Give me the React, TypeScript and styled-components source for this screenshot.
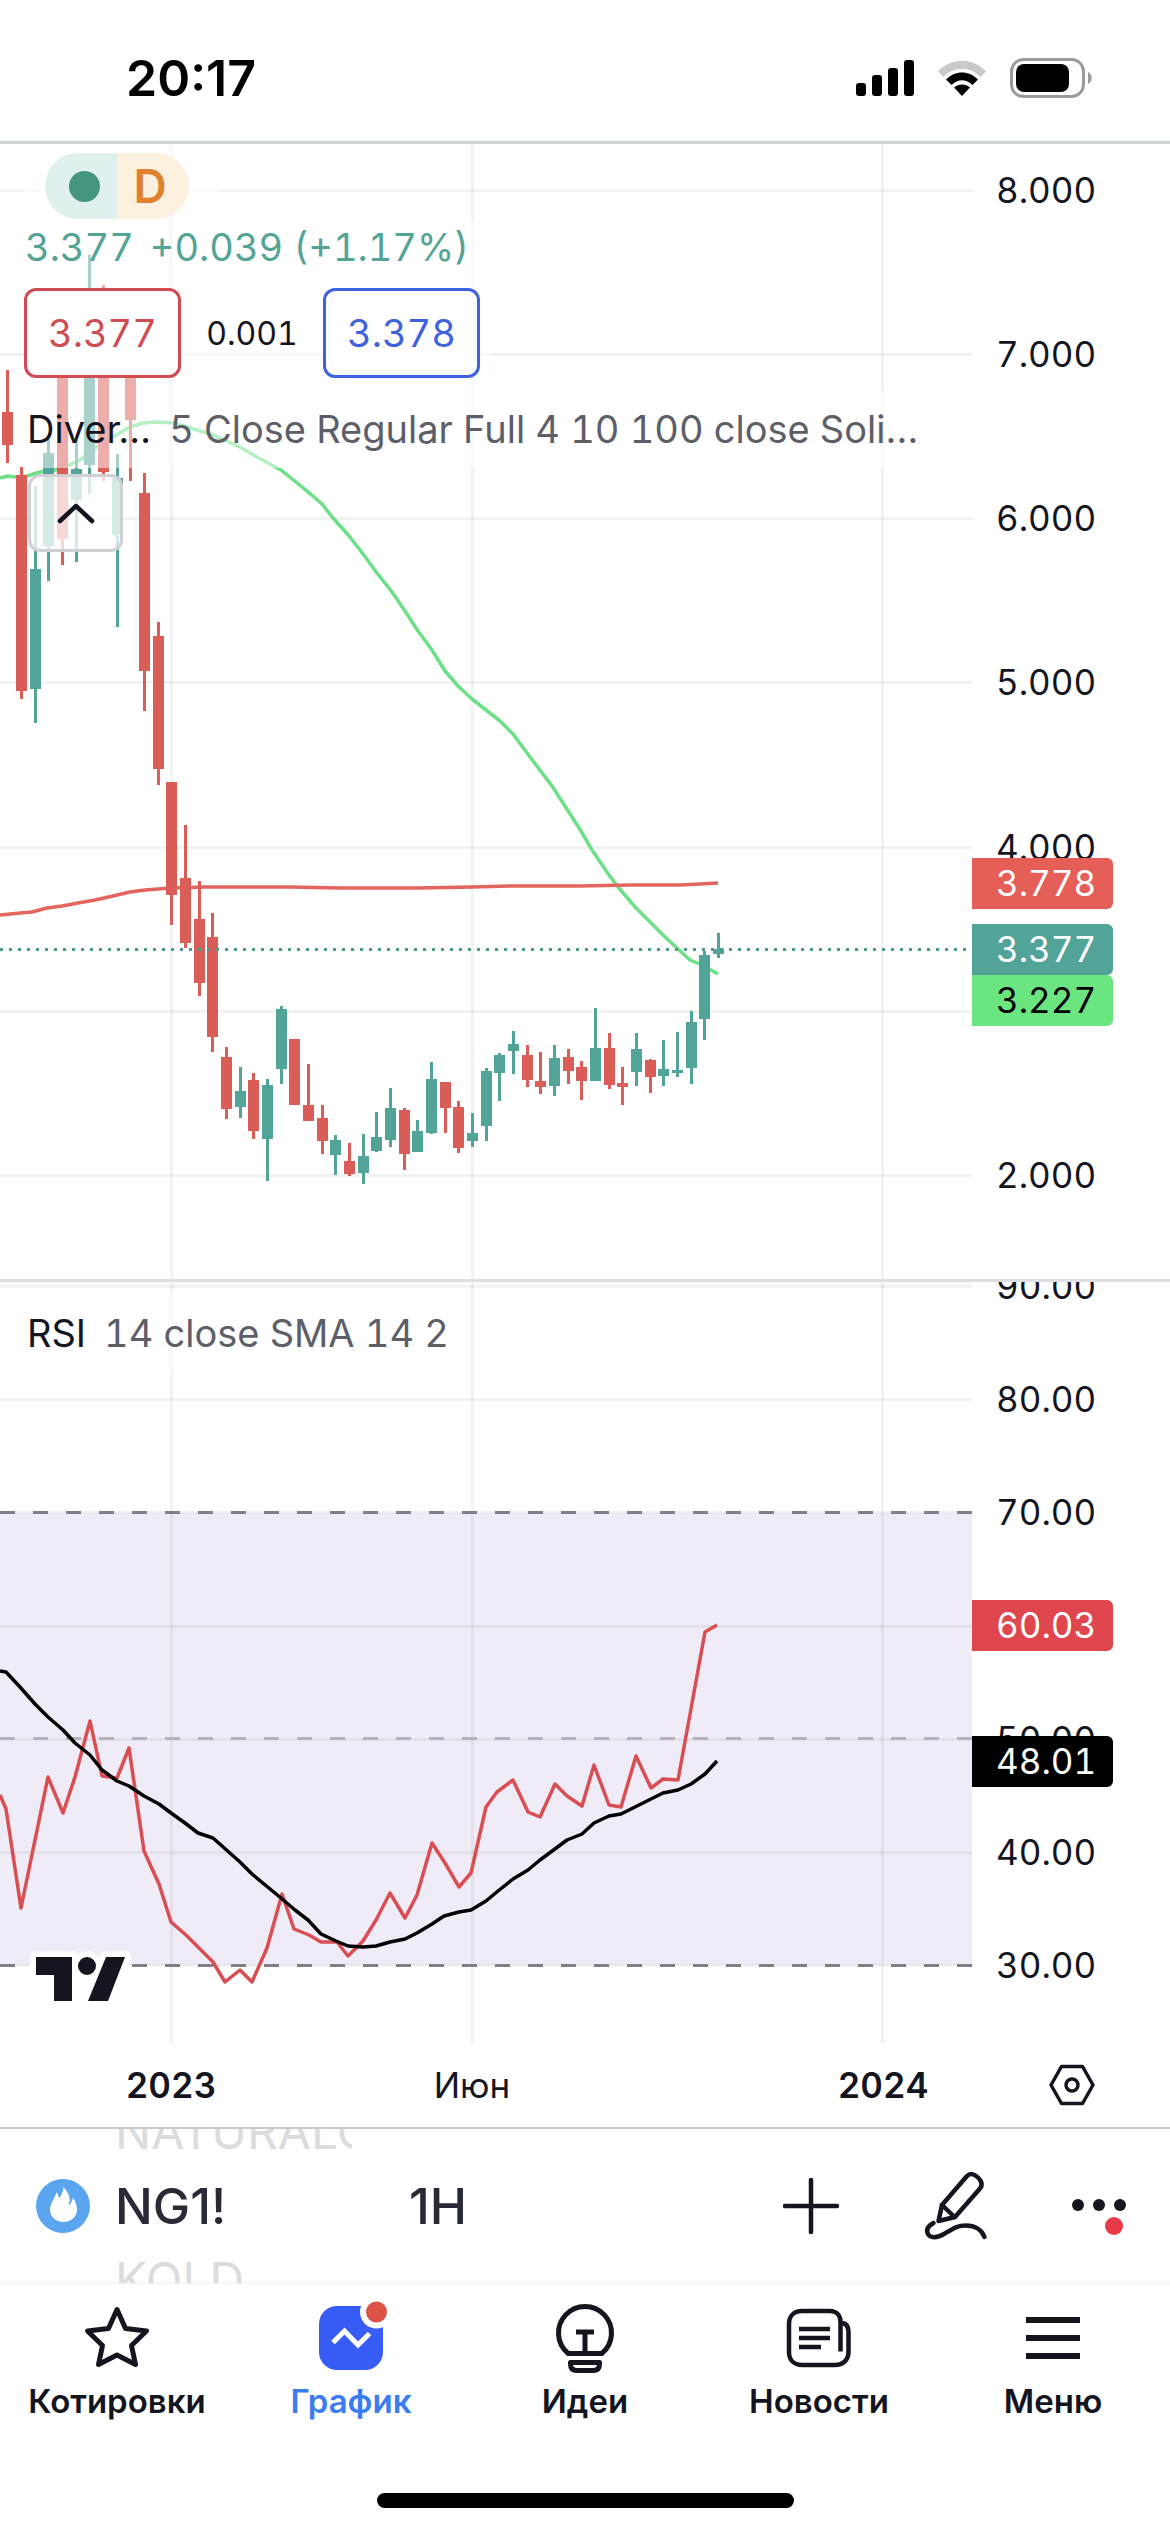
import React from "react";
import styled, { createGlobalStyle } from "styled-components";

const ink = "#14151f";
const up = "#52a398";
const down = "#db5d57";
const veil = "rgba(255, 255, 255, 0.5)";

const GlobalStyle = createGlobalStyle`
  *, *::before, *::after { box-sizing: border-box; }
  body {
    margin: 0;
    background: #fff;
    color: ${ink};
    font-family: Inter, "Noto Sans", sans-serif;
  }
  button {
    font: inherit;
    color: inherit;
    padding: 0;
    border: 0;
    background: none;
    cursor: pointer;
  }
  a { color: inherit; text-decoration: none; }
  svg { display: block; }
`;

const Screen = styled.div`
  display: flex;
  flex-direction: column;
  min-height: 100vh;
  overflow: hidden;
`;

/* ---------- status bar ---------- */

const StatusBar = styled.header`
  display: flex;
  align-items: center;
  justify-content: space-between;
  height: 144px;
  padding: 15px 78px 0 126px;
  border-bottom: 3px solid #cdd3d0;
`;

const Clock = styled.time`
  font-size: 50px;
  line-height: 60px;
  font-weight: 600;
  color: #000;
`;

const StatusIcons = styled.div`
  display: flex;
  align-items: center;
  gap: 23px;
`;

/* ---------- chart ---------- */

const Pane = styled.section`
  display: grid;
  grid-template-columns: minmax(0, 1fr) 198px;
  position: relative;
  font-variant-numeric: tabular-nums;
`;

const Divider = styled.div`
  height: 3px;
  background: #dedfe2;
`;

const Plot = styled.svg`
  width: 100%;
  height: auto;
`;

const Scale = styled.div<{ $top: number; $bottom: number }>`
  display: flex;
  flex-direction: column;
  justify-content: space-between;
  position: relative;
  overflow: hidden;
  padding-bottom: ${(p) => p.$bottom}px;

  &::before {
    content: "";
    margin-bottom: ${(p) => p.$top}px;
  }
`;

const Ticks = styled.div`
  flex: 1;
  display: flex;
  flex-direction: column;
  justify-content: space-between;
`;

const Tick = styled.span`
  height: 40px;
  padding-left: 24px;
  font-size: 35px;
  line-height: 40px;
`;

const Tag = styled.span<{ $at: number; $bg: string; $fg?: string }>`
  position: absolute;
  left: 0;
  top: ${(p) => p.$at}%;
  width: 141px;
  height: 51px;
  padding-left: 24px;
  border-radius: 0 6px 6px 0;
  background: ${(p) => p.$bg};
  color: ${(p) => p.$fg ?? "#fff"};
  font-size: 35px;
  line-height: 51px;
`;

const Legend = styled.div<{ $top: number }>`
  position: absolute;
  left: 24px;
  top: ${(p) => p.$top}px;
  display: flex;
  flex-direction: column;
  align-items: flex-start;
  white-space: nowrap;
  font-size: 38px;
`;

const BadgeRow = styled.div`
  display: flex;
  height: 78px;
  padding: 9px 34px 3px 21px;
  background: ${veil};
`;

const Badge = styled.span<{ $side: "left" | "right" }>`
  display: grid;
  place-items: center;
  width: 72px;
  height: 66px;
  padding: ${(p) => (p.$side === "left" ? "0 0 0 6px" : "0 6px 0 0")};
  border-radius: ${(p) => (p.$side === "left" ? "33px 0 0 33px" : "0 33px 33px 0")};
  background: ${(p) => (p.$side === "left" ? "#dff0ee" : "#fcf0df")};
  color: #e0812e;
  font-size: 46px;
  font-weight: 600;
`;

const OpenDot = styled.i`
  width: 31px;
  height: 31px;
  border-radius: 50%;
  background: #44957f;
`;

const ChangeRow = styled.div`
  display: flex;
  gap: 16px;
  height: 50px;
  padding: 0 24px 0 1px;
  line-height: 50px;
  background: ${veil};
  color: #54a495;
`;

const QuoteRow = styled.div`
  display: flex;
  align-items: center;
  gap: 24px;
  height: 118px;
  padding: 16px 10px 12px 0;
  background: ${veil};
`;

const QuoteButton = styled.button<{ $color: string }>`
  width: 157px;
  height: 90px;
  border: 3px solid ${(p) => p.$color};
  border-radius: 12px;
  background: #fff;
  color: ${(p) => p.$color};
`;

const Spread = styled.span`
  min-width: 94px;
  text-align: center;
  font-size: 32px;
`;

const StudyRow = styled.div`
  display: flex;
  gap: 18px;
  height: 78px;
  padding: 0 12px 0 3px;
  line-height: 78px;
  background: ${veil};
`;

const StudyInputs = styled.span`
  color: #5d5e68;
`;

const CollapseButton = styled.button`
  display: grid;
  place-items: center;
  width: 95px;
  height: 78px;
  margin: 6px 0 0 4px;
  border: 3px solid #cfcfd6;
  border-radius: 12px;
  background: rgba(255, 255, 255, 0.76);
`;

const TimeAxis = styled.div`
  display: grid;
  grid-template-columns: minmax(0, 1fr) 198px;
  height: 86px;
  border-bottom: 2px solid #c9c9cb;
`;

const Dates = styled.div`
  display: grid;
  grid-template-columns: 342fr 260fr 192fr 178fr;
  align-items: center;
  justify-items: center;
  font-size: 35px;
  font-variant-numeric: tabular-nums;
`;

const DateLabel = styled.span<{ $column: number; $bold?: boolean }>`
  grid-column: ${(p) => p.$column};
  font-weight: ${(p) => (p.$bold ? 600 : 400)};
`;

const AxisSettings = styled.button`
  display: grid;
  place-items: center;
  padding-left: 2px;
`;

/* ---------- toolbar ---------- */

const Toolbar = styled.div`
  display: flex;
  align-items: center;
  height: 155px;
  padding: 0 36px;
  border-bottom: 1px solid #efeff1;
  overflow: hidden;
`;

const Wheel = styled.div`
  display: flex;
  flex-direction: column;
  justify-content: center;
  width: 237px;
  height: 154px;
  margin-left: 25px;
  overflow: hidden;
`;

const WheelItem = styled.button<{ $current?: boolean }>`
  flex: none;
  height: 74px;
  text-align: left;
  white-space: nowrap;
  line-height: 74px;
  font-size: ${(p) => (p.$current ? 50 : 48)}px;
  font-weight: ${(p) => (p.$current ? 500 : 400)};
  color: ${(p) => (p.$current ? "#282a35" : "#dcdcdd")};
`;

const Interval = styled.button`
  margin-left: 57px;
  margin-right: auto;
  font-size: 50px;
  font-weight: 500;
  color: #282a35;
`;

const ToolButton = styled.button`
  display: grid;
  place-items: center;
  width: 145px;
  height: 80px;

  &:last-child {
    width: 70px;
    margin-left: 36px;
  }
`;

/* ---------- tab bar ---------- */

const TabBar = styled.nav`
  display: grid;
  grid-template-columns: repeat(5, minmax(0, 1fr));
  padding-top: 13px;
`;

const Tab = styled.a<{ $active?: boolean }>`
  display: flex;
  flex-direction: column;
  align-items: center;
  gap: 4px;
  font-size: 33px;
  line-height: 40px;
  font-weight: 600;
  color: ${(p) => (p.$active ? "#3b7df0" : ink)};
`;

const HomeIndicator = styled.div`
  align-self: center;
  width: 417px;
  height: 15px;
  margin-top: auto;
  margin-bottom: 24px;
  border-radius: 8px;
  background: #000;
`;

/* ---------- data ---------- */

// [high, body top, body bottom, low, rising]
const candles: [number, number, number, number, 0 | 1][] = [
  [226, 268, 301, 319, 0], [323, 331, 547, 555, 0], [342, 425, 545, 579, 1],
  [292, 309, 402, 437, 1], [190, 200, 395, 421, 0], [296, 325, 356, 418, 1],
  [111, 170, 321, 350, 1], [141, 170, 328, 337, 0], [310, 334, 391, 483, 1],
  [170, 200, 276, 337, 0], [329, 349, 527, 567, 0], [478, 492, 625, 641, 0],
  [638, 638, 751, 781, 0], [681, 734, 799, 804, 0], [737, 775, 839, 852, 0],
  [769, 793, 893, 908, 0], [903, 913, 965, 975, 0], [923, 947, 963, 974, 1],
  [929, 936, 987, 995, 0], [935, 941, 995, 1037, 1], [862, 865, 925, 940, 1],
  [895, 895, 961, 961, 0], [920, 961, 977, 977, 0], [961, 974, 997, 1010, 0],
  [991, 996, 1011, 1031, 1], [999, 1017, 1030, 1032, 0], [990, 1012, 1029, 1040, 1],
  [968, 993, 1007, 1008, 1], [944, 964, 996, 1003, 1], [964, 966, 1010, 1026, 0],
  [976, 987, 1008, 1008, 1], [918, 935, 989, 990, 1], [938, 938, 964, 989, 0],
  [957, 963, 1004, 1009, 0], [969, 989, 997, 1003, 1], [924, 927, 982, 997, 1],
  [909, 911, 929, 957, 1], [887, 900, 907, 930, 1], [901, 911, 936, 943, 0],
  [908, 937, 943, 950, 0], [901, 914, 942, 952, 1], [905, 913, 927, 940, 0],
  [917, 923, 937, 956, 0], [864, 904, 937, 937, 1], [889, 904, 941, 945, 0],
  [923, 939, 943, 961, 0], [889, 905, 928, 942, 1], [915, 916, 933, 949, 0],
  [896, 925, 932, 942, 1], [888, 926, 929, 933, 1], [867, 878, 924, 940, 1],
  [807, 811, 875, 896, 1], [789, 805, 810, 814, 1],
];

const fastAverage =
  "0,334 8,332 16,333 27,332 40,328 55,326 67,322 80,316 97,303 113,293 130,283 143,279 157,278 173,279 187,283 200,287 213,291 240,303 257,313 277,324 281,326 307,347 322,360 333,374 350,393 363,410 377,429 392,448 405,467 418,487 432,506 445,527 458,542 472,555 500,577 513,590 533,617 552,642 581,687 592,706 609,731 618,743 636,764 663,791 678,805 690,816 700,820 718,830";
const slowAverage =
  "0,771 20,769 32,768 47,764 62,762 78,759 95,756 113,752 130,748 145,746 158,745 171,744 205,743 250,743 290,743 340,744 417,744 472,743 510,742 580,742 630,741 680,741 700,740 718,739";
const rsi =
  "0,513 6,527 21,626 48,495 63,531 75,495 90,439 102,494 117,496 129,466 144,569 159,602 171,640 186,653 199,666 213,680 225,700 240,688 252,700 267,666 282,612 294,647 309,653 321,660 337,660 348,674 363,659 376,638 390,611 405,636 417,613 432,561 445,581 459,605 471,591 486,525 497,510 513,498 528,530 540,535 555,502 567,514 582,524 594,483 609,523 621,525 636,474 651,506 663,497 678,498 705,350 717,343";
const rsiAverage =
  "0,389 6,390 20,405 35,422 48,435 63,448 75,461 90,473 102,488 117,499 129,504 144,514 159,522 171,531 185,541 198,551 213,556 240,580 252,592 281,616 295,628 308,638 321,652 336,659 348,664 363,665 376,664 390,660 405,657 417,651 432,642 444,634 459,630 471,628 486,619 498,609 513,597 528,588 540,578 567,558 582,552 594,541 609,534 621,532 651,517 663,511 678,508 691,502 705,492 717,479";

const months = [171, 472, 882];

function GridLines({ rows, height }: { rows: number[]; height: number }) {
  return (
    <g stroke="#000" strokeOpacity={0.05} strokeWidth={3}>
      {rows.map((y) => <path key={y} d={`M0 ${y}.5H972`} />)}
      {months.map((x) => <path key={x} d={`M${x}.5 0V${height}`} />)}
    </g>
  );
}

function PricePlot() {
  return (
    <Plot viewBox="0 0 972 1135" role="img" aria-label="График цены NG1!">
      <GridLines rows={[46, 210, 374, 538, 703, 867, 1031]} height={1135} />
      <g fill="none" strokeWidth={3.5} strokeLinejoin="round">
        <polyline points={fastAverage} stroke="#6be087" />
        <polyline points={slowAverage} stroke="#e4655f" />
      </g>
      {candles.map(([high, top, bottom, low, rising], i) => {
        const x = 6 + Math.ceil((41 * i) / 3);
        return (
          <g key={i} fill={rising ? up : down}>
            <rect x={x} y={high} width={3} height={low - high} />
            <rect x={x - 4} y={top} width={11} height={bottom - top} />
          </g>
        );
      })}
      <path d="M0 805.5H970" stroke="#4b9c8f" strokeWidth={3} strokeDasharray="3 6" />
    </Plot>
  );
}

function TradingViewMark() {
  return (
    <g fill={ink} stroke="#fff" strokeWidth={12} strokeLinejoin="round" paintOrder="stroke">
      <path d="M36 675h36v44H54v-26H36z M106 675h19l-17 44H88z M78 684a9 9 0 1 0 18 0a9 9 0 1 0 -18 0z" />
    </g>
  );
}

function RsiPlot() {
  return (
    <Plot viewBox="0 0 972 761" role="img" aria-label="Индикатор RSI">
      <rect y={231} width={972} height={452} fill="#f0ecf7" />
      <GridLines rows={[4, 117, 230, 344, 457, 570, 683]} height={761} />
      <g strokeWidth={3} strokeDasharray="15 18">
        <path d="M0 230.5H972" stroke="#807e88" />
        <path d="M0 456.5H972" stroke="#b5b2bd" />
        <path d="M0 683.5H972" stroke="#807e88" />
      </g>
      <g fill="none" strokeWidth={3.5} strokeLinejoin="round">
        <polyline points={rsi} stroke="#d94e53" />
        <polyline points={rsiAverage} stroke="#000" />
      </g>
      <TradingViewMark />
    </Plot>
  );
}

/* ---------- icons ---------- */

const SignalIcon = () => (
  <svg width="58" height="38" viewBox="0 0 58 38">
    <rect x="0" y="24" width="10" height="13" rx="3" />
    <rect x="16" y="16" width="10" height="21" rx="3" />
    <rect x="32" y="9" width="10" height="28" rx="3" />
    <rect x="48" y="1" width="10" height="36" rx="3" />
  </svg>
);

const WifiIcon = () => (
  <svg width="50" height="38" viewBox="0 0 50 38">
    <path d="M1 12.500C14-2 36-2 49 12.500L43.500 18C33 7 17 7 6.500 18z" fill="#c9c9c9" />
    <path d="M9 20.500C18 11 32 11 41 20.500L35.500 26C29 19.500 21 19.500 14.500 26z" />
    <path d="M17 28.500C21.500 24.500 28.500 24.500 33 28.500L25 37z" />
  </svg>
);

const BatteryIcon = () => (
  <svg width="82" height="40" viewBox="0 0 82 40">
    <rect x="1.500" y="1.500" width="72" height="37" rx="12" fill="none" stroke="#9b9b9b" strokeWidth="3" />
    <rect x="6" y="6" width="53" height="28" rx="8" />
    <path d="M78 14c5 2 5 10 0 12z" fill="#9b9b9b" />
  </svg>
);

const ChevronUpIcon = () => (
  <svg width="40" height="24" viewBox="0 0 40 24" fill="none" stroke={ink} strokeWidth="4.500" strokeLinecap="round" strokeLinejoin="round">
    <path d="M4 20 20 5l16 15" />
  </svg>
);

const HexIcon = () => (
  <svg width="46" height="42" viewBox="0 0 46 42" fill="none" stroke={ink} strokeWidth="3.500">
    <path d="M12.500 2.500h21L44 21 33.500 39.500h-21L2 21z" strokeLinejoin="round" />
    <circle cx="23" cy="21" r="6" />
  </svg>
);

const FlameIcon = () => (
  <svg width="54" height="54" viewBox="0 0 54 54">
    <circle cx="27" cy="27" r="27" fill="#5ba4ef" />
    <path
      fill="#fff"
      d="M27.500 8c4 5 6.500 9 6.500 14 0 1 0 2-.500 3 2-1.500 3-3.500 3.500-6.500 2.500 4 4 8 4 12 0 7.500-6 12.500-13.500 12.500S14 38 14 31c0-6.500 4.500-11 6.500-17.500 1.500 1.500 2.500 3.500 2.500 6 2.500-3 4-6.500 4.500-11.500z"
    />
    <path d="M33 25.500c1.500-2 2-4 1.500-7" fill="none" stroke="#5ba4ef" strokeWidth="1.500" />
  </svg>
);

const PlusIcon = () => (
  <svg width="56" height="56" viewBox="0 0 56 56" stroke={ink} strokeWidth="4.500" strokeLinecap="round">
    <path d="M2 28h52M28 2v52" />
  </svg>
);

const PencilIcon = () => (
  <svg width="72" height="80" viewBox="0 0 72 80" fill="none" stroke={ink} strokeWidth="4.500" strokeLinecap="round" strokeLinejoin="round">
    <path d="M22 39 47 10c3-3 7-2.500 11 1.500s5 7.500 2 11L35 51l-16.500 4z" />
    <path d="m22 39 12.500 12" />
    <path d="M13.500 57C8 60 6 64 8 68c2.500 4.500 9 4 16 0 10-6 13-8.500 22-8.500S62 64 64.500 71" />
  </svg>
);

const MoreIcon = () => (
  <svg width="60" height="80" viewBox="0 0 60 80" fill={ink}>
    <circle cx="9" cy="39" r="6" />
    <circle cx="30" cy="39" r="6" />
    <circle cx="51" cy="39" r="6" />
    <circle cx="45" cy="60" r="9" fill="#e83a48" />
  </svg>
);

function TabIcon({ children, width = 5 }: { children: React.ReactNode; width?: number }) {
  return (
    <svg width="80" height="80" viewBox="0 0 80 80" fill="none" stroke={ink} strokeWidth={width} strokeLinejoin="round">
      {children}
    </svg>
  );
}

const StarIcon = () => (
  <TabIcon>
    <path d="M40 12.500 48.500 31.500 69.500 34 54.500 48.500 58.500 67.500 40 58 21.500 67.500 25.500 48.500 10.500 34 31.500 31.500z" />
  </TabIcon>
);

const ChartIcon = () => (
  <TabIcon>
    <rect x="8" y="9" width="64" height="64" rx="18" fill="#385df6" stroke="none" />
    <circle cx="65.500" cy="15" r="16.500" fill="#fff" stroke="none" />
    <circle cx="65.500" cy="15" r="10.500" fill="#dc5346" stroke="none" />
    <path d="M22 45.500 33.500 34 47 48 58.500 36.500" stroke="#fff" strokeLinejoin="miter" />
  </TabIcon>
);

const BulbIcon = () => (
  <TabIcon>
    <path d="M23.200 56.500A26.500 26.500 0 1 1 56.800 56.500z" />
    <path d="M25.500 65.500h29v1.500q0 6.500-6.500 6.500h-16q-6.500 0-6.500-6.500z" />
    <path d="M31 35h18M40 35v20" />
  </TabIcon>
);

const NewsIcon = () => (
  <TabIcon width={4.5}>
    <path d="M61.500 54.500V25C61.500 18 57 14 51 14H23C15 14 10 19 10 27v28c0 8 5 13 13 13h33c8 0 13.500-5 13.500-13V36c0-6-2-10-7-10" />
    <path d="M20 32h31M20 41h31M20 50h22" />
  </TabIcon>
);

const MenuIcon = () => (
  <TabIcon width={6}>
    <path d="M13 23h54M13 41h54M13 59h54" />
  </TabIcon>
);

const tabs = [
  { label: "Котировки", Icon: StarIcon },
  { label: "График", Icon: ChartIcon, active: true },
  { label: "Идеи", Icon: BulbIcon },
  { label: "Новости", Icon: NewsIcon },
  { label: "Меню", Icon: MenuIcon },
];

export default function App() {
  return (
    <Screen>
      <GlobalStyle />
      <StatusBar>
        <Clock>20:17</Clock>
        <StatusIcons>
          <SignalIcon />
          <WifiIcon />
          <BatteryIcon />
        </StatusIcons>
      </StatusBar>

      <Pane>
        <PricePlot />
        <Scale $top={26} $bottom={84}>
          <Ticks>
            {["8.000", "7.000", "6.000", "5.000", "4.000", "", "2.000"].map((t, i) => (
              <Tick key={i}>{t}</Tick>
            ))}
          </Ticks>
          <Tag $at={62.9} $bg="#e65e58">3.778</Tag>
          <Tag $at={68.7} $bg={up}>3.377</Tag>
          <Tag $at={73.2} $bg="#6be580" $fg="#000">3.227</Tag>
        </Scale>
        <Legend $top={0}>
          <BadgeRow>
            <Badge $side="left"><OpenDot /></Badge>
            <Badge $side="right">D</Badge>
          </BadgeRow>
          <ChangeRow>
            <span>3.377</span>
            <span>+0.039 (+1.17%)</span>
          </ChangeRow>
          <QuoteRow>
            <QuoteButton $color="#d04c52">3.377</QuoteButton>
            <Spread>0.001</Spread>
            <QuoteButton $color="#3f62df">3.378</QuoteButton>
          </QuoteRow>
          <StudyRow>
            <span>Diver…</span>
            <StudyInputs>5 Close Regular Full 4 10 100 close Soli…</StudyInputs>
          </StudyRow>
          <CollapseButton aria-label="Свернуть">
            <ChevronUpIcon />
          </CollapseButton>
        </Legend>
      </Pane>

      <Divider />

      <Pane>
        <RsiPlot />
        <Scale $top={-16} $bottom={58}>
          <Ticks>
            {["90.00", "80.00", "70.00", "", "50.00", "40.00", "30.00"].map((t, i) => (
              <Tick key={i}>{t}</Tick>
            ))}
          </Ticks>
          <Tag $at={41.8} $bg="#df464d">60.03</Tag>
          <Tag $at={59.6} $bg="#000">48.01</Tag>
        </Scale>
        <Legend $top={12}>
          <StudyRow>
            <span>RSI</span>
            <StudyInputs>14 close SMA 14 2</StudyInputs>
          </StudyRow>
        </Legend>
      </Pane>

      <TimeAxis>
        <Dates>
          <DateLabel $column={1} $bold>2023</DateLabel>
          <DateLabel $column={2}>Июн</DateLabel>
          <DateLabel $column={4} $bold>2024</DateLabel>
        </Dates>
        <AxisSettings aria-label="Настройки шкалы">
          <HexIcon />
        </AxisSettings>
      </TimeAxis>

      <Toolbar>
        <FlameIcon />
        <Wheel>
          <WheelItem>NATURALGAS</WheelItem>
          <WheelItem $current>NG1!</WheelItem>
          <WheelItem>KOLD</WheelItem>
        </Wheel>
        <Interval>1H</Interval>
        <ToolButton aria-label="Добавить"><PlusIcon /></ToolButton>
        <ToolButton aria-label="Рисование"><PencilIcon /></ToolButton>
        <ToolButton aria-label="Ещё"><MoreIcon /></ToolButton>
      </Toolbar>

      <TabBar>
        {tabs.map(({ label, Icon, active }) => (
          <Tab key={label} href="#" $active={active}>
            <Icon />
            {label}
          </Tab>
        ))}
      </TabBar>
      <HomeIndicator />
    </Screen>
  );
}
